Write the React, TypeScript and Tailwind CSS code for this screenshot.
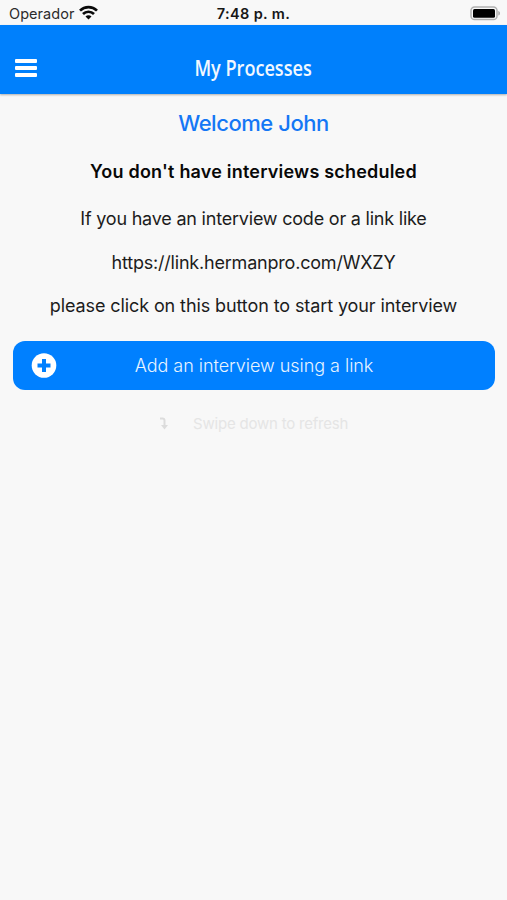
function StatusBar() {
  return (
    <div className="grid h-[25px] grid-cols-3 items-center pt-[2px] text-[14.5px] leading-[22px] text-[#2b2b2b]">
      <div className="flex items-center gap-[5px] pl-[9px]">
        <span className="tracking-[0.05px]">Operador</span>
        <svg className="-mt-[2px]" width="19" height="15" viewBox="0 0 19 15" fill="none" stroke="#0a0a0a" strokeWidth="2.7">
          <path d="M1 5.6a12.2 12.2 0 0 1 17 0" />
          <path d="M4 9a7.8 7.8 0 0 1 11 0" />
          <path d="M9.5 14.500 6.500 11.500a4.100 4.100 0 0 1 6 0Z" fill="#0a0a0a" stroke="none" />
        </svg>
      </div>
      <span className="text-center font-semibold tracking-[0.35px] whitespace-nowrap text-[#161616]">7:48 p. m.</span>
      <div className="flex justify-end pr-[6px]">
        <svg className="-mt-px" width="31" height="15" viewBox="0 0 31 15">
          <rect x="1" y="1" width="26" height="12.6" rx="3.6" fill="#f8f8f8" stroke="#b0b0b0" strokeWidth="1.5" />
          <rect x="3" y="3" width="22" height="8.8" rx="1.5" fill="#000" />
          <path d="M28.3 5c2.2.6 2.2 4 0 4.600Z" fill="#a8a8a8" />
        </svg>
      </div>
    </div>
  );
}

function Header() {
  return (
    <header className="grid h-[69px] grid-cols-[60px_1fr_60px] items-center bg-[#0080fc] pt-[17px] shadow-[0_1px_2px_rgba(0,0,0,0.3)]">
      <button aria-label="Menu" className="ml-[15px] flex w-[22px] flex-col gap-[3px]">
        <span className="h-1 rounded-[1px] bg-white" />
        <span className="h-1 rounded-[1px] bg-white" />
        <span className="h-1 rounded-[1px] bg-white" />
      </button>
      <h1 className="text-center font-['Open_Sans',sans-serif] text-[21px] leading-[26px] font-semibold whitespace-nowrap text-[#f2f8ff]">
        <span className="inline-block scale-x-[0.862]">My Processes</span>
      </h1>
    </header>
  );
}

export default function App() {
  return (
    <div className="min-h-screen overflow-hidden bg-[#f8f8f8] font-[Inter,'Liberation_Sans',sans-serif]">
      <StatusBar />
      <Header />
      <main className="flex flex-col px-[13px] text-center whitespace-nowrap">
        <h2 className="mt-[14px] text-[22px] leading-[30px] font-medium tracking-[-0.45px] text-[#1477f5]">Welcome John</h2>
        <p className="mt-[21px] text-[18px] leading-[26px] font-semibold tracking-[0.2px] text-[#080808]">You don't have interviews scheduled</p>
        <div className="mt-[12px] text-[18px] leading-[44px] text-[#1c1c1c]">
          <p className="tracking-[-0.21px]">If you have an interview code or a link like</p>
          <p className="tracking-[-0.2px]">https://link.hermanpro.com/WXZY</p>
          <p className="-mt-px tracking-[-0.1px]">please click on this button to start your interview</p>
        </div>
        <button className="mt-[13px] grid h-[49px] w-[482px] grid-cols-[60px_1fr_60px] items-center rounded-[12px] bg-[#0080ff]">
          <svg className="ml-[18px]" width="26" height="26" viewBox="0 0 26 26">
            <circle cx="13" cy="12.500" r="12.300" fill="#fff" />
            <path d="M13 6v13M6.500 12.500h13" stroke="#0080ff" strokeWidth="4" />
          </svg>
          <span className="text-[18px] leading-[26px] font-light tracking-[-0.03px] text-[#e8f4ff]">Add an interview using a link</span>
        </button>
        <div className="mt-[23px] flex items-center pl-[147px] text-[15px] leading-[22px] text-[#e5e5e5]">
          <svg className="-mt-[2px]" width="9" height="13" viewBox="0 0 9 13" fill="none" stroke="#dcdcdc" strokeWidth="2">
            <path d="M0 1.500h2.500Q4.500 1.500 4.500 3.500V9" />
            <path d="M1 8h7L4.500 12.500Z" fill="#dcdcdc" stroke="none" />
          </svg>
          <span className="ml-[24px] tracking-[-0.21px]">Swipe down to refresh</span>
        </div>
      </main>
    </div>
  );
}
